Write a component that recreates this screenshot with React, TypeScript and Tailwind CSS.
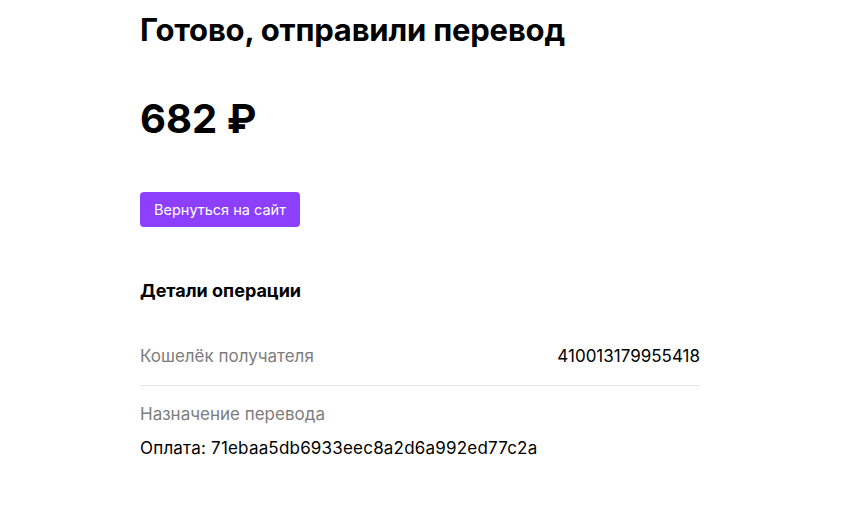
import React from 'react';

const DetailRow: React.FC<{ label: string; value: string }> = ({ label, value }) => (
    <div className="flex justify-between items-center h-[57px] border-b border-[#e6e6e6]">
        <span className="text-[#7d7d7d]">{label}</span>
        <span className="text-black">{value}</span>
    </div>
);

const App: React.FC = () => {
    return (
        <div className="bg-white min-h-screen text-black font-['Inter',sans-serif]">
            <div className="w-[560px] ml-[140px] pt-[8px]">
                <h1 className="text-[31px] leading-[44px] font-bold tracking-[-0.2px]">Готово, отправили перевод</h1>

                <div className="mt-[39px] text-[40px] leading-[56px] font-bold">682 ₽</div>

                <button className="mt-[45px] h-[35px] px-[14px] rounded-[4px] bg-[#8c3ffd] text-white text-[14.5px]">
                    Вернуться на сайт
                </button>

                <h3 className="mt-[51px] text-[18px] leading-[26px] font-bold">Детали операции</h3>

                <div className="mt-[25px] text-[17px]">
                    <DetailRow label="Кошелёк получателя" value="410013179955418" />
                    <div className="pt-[16px]">
                        <div className="text-[#7d7d7d] leading-[24px]">Назначение перевода</div>
                        <div className="mt-[10px] leading-[24px] tracking-[0.2px]">Оплата: 71ebaa5db6933eec8a2d6a992ed77c2a</div>
                    </div>
                </div>
            </div>
        </div>
    );
};

export default App;
